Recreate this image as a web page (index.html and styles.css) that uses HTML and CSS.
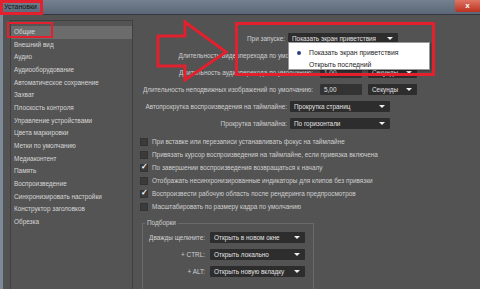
FILE: index.html
```html
<!DOCTYPE html>
<html lang="ru">
<head>
    <meta charset="UTF-8">
    <meta name="viewport" content="width=device-width, initial-scale=1.0">
    <title>Установки</title>
    <link rel="stylesheet" href="styles.css">
</head>
<body>
    <div class="window">
        <div class="titlebar">
            <span class="title">Установки</span>
            <span class="close">x</span>
        </div>
        <div class="dialog">
            <ul class="cats">
                <li class="active">Общие</li>
                <li>Внешний вид</li>
                <li>Аудио</li>
                <li>Аудиооборудование</li>
                <li>Автоматическое сохранение</li>
                <li>Захват</li>
                <li>Плоскость контроля</li>
                <li>Управление устройствами</li>
                <li>Цвета маркировки</li>
                <li>Метки по умолчанию</li>
                <li>Медиаконтент</li>
                <li>Память</li>
                <li>Воспроизведение</li>
                <li>Синхронизировать настройки</li>
                <li>Конструктор заголовков</li>
                <li>Обрезка</li>
            </ul>
            <div class="pane">
                <div class="row">
                    <span class="lbl lbl-start">При запуске:</span>
                    <div class="select sel-start">Показать экран приветствия</div>
                </div>
                <div class="row">
                    <span class="lbl lbl-dur">Длительность видеоперехода по умолчанию:</span>
                    <!-- covered by the open list -->
                    <div class="num"></div>
                    <div class="select sel-units"></div>
                </div>
                <div class="row">
                    <span class="lbl lbl-dur">Длительность аудиоперехода по умолчанию:</span>
                    <div class="num">1,00</div>
                    <div class="select sel-units">Секунды</div>
                </div>
                <div class="row">
                    <span class="lbl lbl-dur">Длительность неподвижных изображений по умолчанию:</span>
                    <div class="num">5,00</div>
                    <div class="select sel-units">Секунды</div>
                </div>
                <div class="row">
                    <span class="lbl lbl-scroll">Автопрокрутка воспроизведения на таймлайне:</span>
                    <div class="select sel-scroll">Прокрутка страниц</div>
                </div>
                <div class="row">
                    <span class="lbl lbl-scroll">Прокрутка таймлайна:</span>
                    <div class="select sel-scroll">По горизонтали</div>
                </div>

                <div class="checks">
                    <div class="check"><span class="cb"></span>При вставке или перезаписи устанавливать фокус на таймлайне</div>
                    <div class="check"><span class="cb"></span>Привязать курсор воспроизведения на таймлайне, если привязка включена</div>
                    <div class="check"><span class="cb on"></span>По завершении воспроизведения возвращаться к началу</div>
                    <div class="check"><span class="cb"></span>Отображать несинхронизированные индикаторы для клипов без привязки</div>
                    <div class="check"><span class="cb on"></span>Воспроизвести рабочую область после рендеринга предпросмотров</div>
                    <div class="check"><span class="cb"></span>Масштабировать по размеру кадра по умолчанию</div>
                </div>

                <fieldset class="group">
                    <legend>Подборки</legend>
                    <div class="row">
                        <span class="lbl lbl-grp">Дважды щелкните:</span>
                        <div class="select sel-grp">Открыть в новом окне</div>
                    </div>
                    <div class="row">
                        <span class="lbl lbl-grp">+ CTRL:</span>
                        <div class="select sel-grp">Открыть локально</div>
                    </div>
                    <div class="row">
                        <span class="lbl lbl-grp">+ ALT:</span>
                        <div class="select sel-grp">Открыть новую вкладку</div>
                    </div>
                </fieldset>
            </div>
        </div>

        <!-- open dropdown -->
        <div class="popup">
            <div class="opt current">Показать экран приветствия</div>
            <div class="opt">Открыть последний</div>
        </div>

        <!-- red annotation marks -->
        <div class="mark mark-title"></div>
        <div class="mark mark-item"></div>
        <div class="mark mark-start"></div>
        <svg class="arrow" width="80" height="66" viewBox="0 0 80 66">
            <polygon points="3,18 30,18 30,4 71,34 30,62 30,48 3,48" fill="none" stroke="#e3202d" stroke-width="3"/>
        </svg>
    </div>
</body>
</html>
```

FILE: styles.css
```css
* {
    box-sizing: border-box;
}

body {
    margin: 0;
    padding: 0;
    width: 480px;
    height: 289px;
    overflow: hidden;
    background: #535353;
    font-family: "Liberation Sans", Arial, sans-serif;
    font-size: 6.4px;
    color: #cfcfcf;
}

.window {
    position: relative;
    width: 480px;
    height: 289px;
}

.titlebar {
    display: flex;
    align-items: flex-start;
    height: 15px;
    background: linear-gradient(#74818f, #5b6776);
    border-bottom: 1px solid #34393f;
}

.title {
    padding: 3px 0 0 4px;
    font-size: 7px;
    color: #121212;
}

.close {
    margin-left: auto;
    width: 25px;
    height: 12px;
    line-height: 11px;
    text-align: center;
    font-size: 8px;
    font-weight: bold;
    color: #fff;
    background: linear-gradient(#df7563, #b8321f);
    border-radius: 0 0 0 3px;
}

.dialog {
    display: flex;
    height: 274px;
    border-left: 3px solid #7c8a98;
}

/* categories */

.cats {
    list-style: none;
    margin: 5px 0 0 7px;
    padding: 5px 0 0 0;
    width: 123px;
    flex: none;
    background: #545454;
    border: 1px solid #404040;
    border-bottom: none;
}

.cats li {
    height: 12.67px;
    line-height: 12.67px;
    padding-left: 3px;
    color: #d6d6d6;
    white-space: nowrap;
}

.cats li.active {
    background: #6c6c6c;
}

/* settings pane */

.pane {
    margin-left: 7px;
    padding-top: 18px;
    flex: 1;
}

.row {
    display: flex;
    align-items: center;
    height: 11px;
    margin-top: 6px;
    white-space: nowrap;
}

.pane > .row:first-child {
    margin-top: 0;
}

.lbl {
    flex: none;
    text-align: right;
}

.lbl-start { width: 145px; margin-right: 3px; }
.lbl-dur { width: 173px; margin-right: 7px; }
.lbl-scroll { width: 147px; margin-right: 3px; }
.lbl-grp { width: 62px; margin-right: 5px; }

.select {
    position: relative;
    flex: none;
    height: 11px;
    line-height: 11px;
    padding-left: 4px;
    background: #2d2d2d;
    color: #e2e2e2;
    border-radius: 1px;
}

.select::after {
    content: "";
    position: absolute;
    right: 5px;
    top: 4px;
    border-top: 3px solid #f0f0f0;
    border-left: 3px solid transparent;
    border-right: 3px solid transparent;
}

.sel-start { width: 110px; }
.sel-units { width: 49px; margin-left: 6px; }
.sel-scroll { width: 100px; }
.sel-grp { width: 95px; }

.num {
    width: 42px;
    height: 11px;
    line-height: 11px;
    padding-left: 4px;
    background: #333;
    color: #e2e2e2;
    border-radius: 1px;
}

.checks {
    margin-top: 6px;
}

.check {
    display: flex;
    align-items: center;
    gap: 4px;
    height: 13px;
    white-space: nowrap;
}

.cb {
    position: relative;
    width: 8px;
    height: 8px;
    background: #3b3b3b;
    border: 1px solid #333;
}

.cb.on::after {
    content: "✓";
    position: absolute;
    left: 0;
    top: -3px;
    font-size: 8px;
    font-weight: bold;
    color: #fff;
}

.group {
    margin: 6px 0 0 2px;
    padding: 0 0 12px 0;
    width: 172px;
    border: 1px solid #6a6a6a;
}

.group legend {
    margin-left: 2px;
    padding: 0 2px;
    line-height: 8px;
}

.group .row:first-of-type {
    margin-top: 5px;
}

/* open dropdown list */

.popup {
    position: absolute;
    left: 288px;
    top: 42px;
    width: 142px;
    height: 28px;
    padding-top: 4px;
    background: #fff;
    border: 1px solid #9a9a9a;
    box-shadow: 1px 1px 2px rgba(0, 0, 0, 0.4);
}

.opt {
    position: relative;
    height: 11.5px;
    line-height: 11.5px;
    padding-left: 20px;
    color: #1e1e1e;
    font-size: 6.8px;
}

.opt.current::before {
    content: "";
    position: absolute;
    left: 8px;
    top: 4px;
    width: 4px;
    height: 4px;
    border-radius: 50%;
    background: #2c3f80;
}

/* annotations */

.mark {
    position: absolute;
    border: 3px solid #e3202d;
}

.mark-title {
    left: 0;
    top: 0;
    width: 43px;
    height: 15px;
}

.mark-item {
    left: 7px;
    top: 22px;
    width: 46px;
    height: 16px;
    border-width: 2.5px;
}

.mark-start {
    left: 235px;
    top: 22px;
    width: 200px;
    height: 54px;
}

.arrow {
    position: absolute;
    left: 155px;
    top: 18px;
}
```
